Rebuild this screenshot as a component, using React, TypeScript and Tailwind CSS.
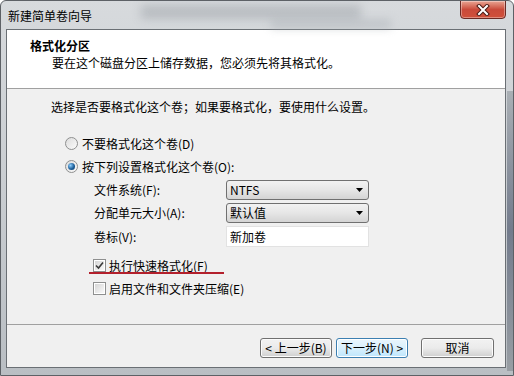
import React from "react";

const font = "font-['Noto_Sans_CJK_SC','Noto_Sans',sans-serif]";

function Radio({ checked }: { checked?: boolean }) {
  return (
    <div className="w-[13px] h-[13px] rounded-full border border-[#8e8f8f] bg-gradient-to-br from-[#dcdcdc] to-[#fbfbfb] flex items-center justify-center shrink-0">
      {checked && (
        <div className="w-[7px] h-[7px] rounded-full bg-[radial-gradient(circle_at_35%_35%,#8fd0ff,#1d5f9a_55%,#0c3a66)]" />
      )}
    </div>
  );
}

function Checkbox({ checked }: { checked?: boolean }) {
  return (
    <div className="w-[13px] h-[13px] border border-[#8e8f8f] bg-white p-[1px] shrink-0">
      <div className="w-full h-full bg-gradient-to-br from-[#d6d6d6] to-[#f9f9f9] flex items-center justify-center">
        {checked && (
          <svg width="9" height="9" viewBox="0 0 9 9">
            <path d="M1 4.5 L3.5 7 L8 1.5" fill="none" stroke="#3a3a3a" strokeWidth="1.6" />
          </svg>
        )}
      </div>
    </div>
  );
}

function Select({ value }: { value: string }) {
  return (
    <div className="w-[143px] h-[20px] rounded-[3px] border border-[#707070] bg-gradient-to-b from-[#f2f2f2] via-[#e6e6e6] to-[#d4d4d4] flex items-center justify-between pl-[3px] pr-[5px] text-[12px] text-black">
      <span>{value}</span>
      <svg width="7" height="4" viewBox="0 0 7 4">
        <path d="M0 0 H7 L3.5 4 Z" fill="#000" />
      </svg>
    </div>
  );
}

function Button({ label, focused, className }: { label: string; focused?: boolean; className?: string }) {
  return (
    <div
      className={`h-[20px] rounded-[3px] border flex items-center justify-center text-[12px] text-black ${
        focused
          ? "border-[#3c7fb1] bg-gradient-to-b from-[#eaf6fd] via-[#d9f0fc] to-[#bee6fd] shadow-[inset_0_0_0_1px_#ffffff]"
          : "border-[#707070] bg-gradient-to-b from-[#f2f2f2] via-[#ebebeb] to-[#cfcfcf] shadow-[inset_0_0_0_1px_#fcfcfc]"
      } ${className ?? ""}`}
    >
      {label}
    </div>
  );
}

export default function App() {
  return (
    <div className={`w-[514px] h-[376px] relative overflow-hidden ${font} bg-gradient-to-b from-[#d7dadd] via-[#c9cdd1] to-[#b9bec3] border border-[#5d6166] rounded-t-[6px]`}>
      {/* blurred background behind glass */}
      <div className="absolute left-[140px] top-[4px] w-[220px] h-[14px] bg-[#8f959b] opacity-40 blur-[5px]" />
      <div className="absolute left-[270px] top-[18px] w-[120px] h-[10px] bg-[#a4aab0] opacity-40 blur-[4px]" />
      <div className="absolute right-0 top-[90px] w-[6px] h-[280px] bg-gradient-to-b from-[#9aa0a6] via-[#505a70] to-[#8a9096] opacity-70" />

      {/* title bar */}
      <div className="h-[28px] flex items-center pl-[7px] pt-[1px] text-[12px] text-black">新建简单卷向导</div>

      {/* close */}
      <div className="absolute right-[7px] top-[-1px] w-[46px] h-[19px] rounded-b-[4px] border border-[#6b2a24] bg-gradient-to-b from-[#e8a493] via-[#c94a3a] to-[#d0503a] flex items-center justify-center shadow-[inset_0_0_0_1px_rgba(255,255,255,0.35)]">
        <svg width="14" height="12" viewBox="0 0 14 12">
          <path d="M3 2 L11 10 M11 2 L3 10" stroke="#4a1a14" strokeWidth="4" strokeLinecap="square" />
          <path d="M3 2 L11 10 M11 2 L3 10" stroke="#ffffff" strokeWidth="2" strokeLinecap="square" />
        </svg>
      </div>

      {/* client area */}
      <div className="ml-[5px] w-[500px] h-[339px] border border-[#6a6f74] bg-[#f0f0f0] flex flex-col text-[12px] text-black">
        <div className="h-[59px] bg-white border-b border-[#a0a0a0] pt-[7px] leading-[17px]">
          <div className="pl-[23px] font-bold">格式化分区</div>
          <div className="pl-[45px]">要在这个磁盘分区上储存数据，您必须先将其格式化。</div>
        </div>

        <div className="h-[235px] pt-[11px] leading-[14px]">
          <div className="pl-[44px]">选择是否要格式化这个卷；如果要格式化，要使用什么设置。</div>

          <div className="mt-[18px] pl-[58px] h-[23px] flex items-center gap-[4px]">
            <Radio />
            <span>不要格式化这个卷(D)</span>
          </div>
          <div className="pl-[58px] h-[23px] flex items-center gap-[4px]">
            <Radio checked />
            <span>按下列设置格式化这个卷(O):</span>
          </div>

          <div className="pl-[87px] h-[23px] flex items-center">
            <span className="w-[132px]">文件系统(F):</span>
            <Select value="NTFS" />
          </div>
          <div className="pl-[87px] h-[23px] flex items-center">
            <span className="w-[132px]">分配单元大小(A):</span>
            <Select value="默认值" />
          </div>
          <div className="pl-[87px] h-[25px] flex items-center">
            <span className="w-[132px]">卷标(V):</span>
            <div className="w-[143px] h-[21px] bg-white border border-[#e2e2e2] flex items-center pl-[3px]">新加卷</div>
          </div>

          <div className="mt-[5px] pl-[86px] h-[23px] flex items-center gap-[3px] relative">
            <Checkbox checked />
            <span>执行快速格式化(F)</span>
            <div className="absolute left-[82px] top-[18px] w-[135px] h-[2px] bg-[#b3202c]" />
          </div>
          <div className="pl-[86px] h-[23px] flex items-center gap-[3px]">
            <Checkbox />
            <span>启用文件和文件夹压缩(E)</span>
          </div>
        </div>

        <div className="flex-1 border-t border-[#a0a0a0] pt-[13px] pr-[11px] flex justify-end items-start">
          <Button label="< 上一步(B)" className="w-[72px]" />
          <Button label="下一步(N) >" focused className="w-[72px] ml-[4px]" />
          <Button label="取消" className="w-[73px] ml-[13px]" />
        </div>
      </div>
    </div>
  );
}
